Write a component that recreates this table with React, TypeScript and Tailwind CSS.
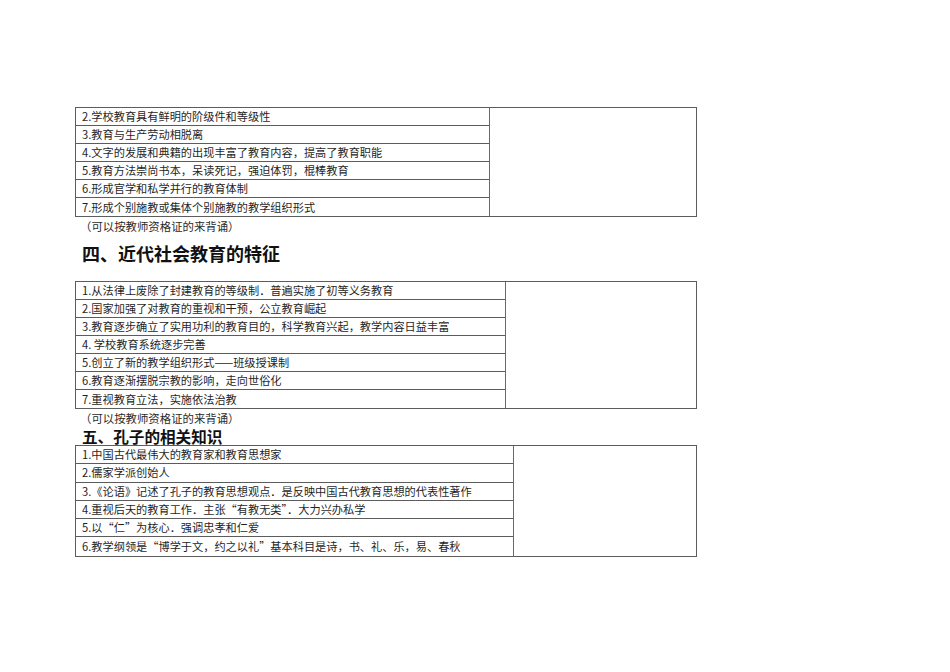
import React from "react";

const t1 = [
  "2.学校教育具有鲜明的阶级件和等级性",
  "3.教育与生产劳动相脱离",
  "4.文字的发展和典籍的出现丰富了教育内容，提高了教育职能",
  "5.教育方法崇尚书本，呆读死记，强迫体罚，棍棒教育",
  "6.形成官学和私学并行的教育体制",
  "7.形成个别施教或集体个别施教的教学组织形式",
];

const t2 = [
  "1.从法律上废除了封建教育的等级制．普遍实施了初等义务教育",
  "2.国家加强了对教育的重视和干预，公立教育崛起",
  "3.教育逐步确立了实用功利的教育目的，科学教育兴起，教学内容日益丰富",
  "4. 学校教育系统逐步完善",
  "5.创立了新的教学组织形式——班级授课制",
  "6.教育逐渐摆脱宗教的影响，走向世俗化",
  "7.重视教育立法，实施依法治教",
];

const t3 = [
  "1.中国古代最伟大的教育家和教育思想家",
  "2.儒家学派创始人",
  "3.《论语》记述了孔子的教育思想观点．是反映中国古代教育思想的代表性著作",
  "4.重视后天的教育工作．主张“有教无类”．大力兴办私学",
  "5.以“仁”为核心．强调忠孝和仁爱",
  "6.教学纲领是“博学于文，约之以礼”基本科目是诗，书、礼、乐，易、春秋",
];

function Table({ rows, leftW, tall }: { rows: string[]; leftW: string; tall?: boolean }) {
  return (
    <div className="flex w-[622px] border border-[#5c5c5c]">
      <div className={`${leftW} border-r border-[#6a6a6a]`}>
        {rows.map((r, i) => {
          const last = i === rows.length - 1;
          const h = tall ? "h-[18.3px]" : "h-[18px]";
          return (
            <div
              key={i}
              className={`${h} pl-[6px] flex items-center whitespace-nowrap text-[11.2px] leading-[17px] text-[#1f1f1f] ${
                last ? "" : "border-b border-[#5c5c5c]"
              }`}
            >
              {r}
            </div>
          );
        })}
      </div>
      <div className="flex-1" />
    </div>
  );
}

export default function App() {
  return (
    <div className="w-[950px] h-[672px] bg-white font-['Noto_Sans_CJK_SC',sans-serif] pt-[107px] pl-[75px]">
      <Table rows={t1} leftW="w-[414px]" />
      <div className="h-[18px] leading-[18px] pl-[5px] text-[11.4px] text-[#2a2a2a]">（可以按教师资格证的来背诵）</div>
      <div className="mt-[5px] h-[26px] leading-[26px] pl-[7px] text-[18px] font-bold text-[#111]">四、近代社会教育的特征</div>
      <div className="h-[15px]" />
      <Table rows={t2} leftW="w-[430px]" />
      <div className="h-[19px] leading-[19px] pl-[5px] text-[11.4px] text-[#2a2a2a]">（可以按教师资格证的来背诵）</div>
      <div className="h-[17px] leading-[16px] pl-[7px] text-[15.6px] font-bold text-[#111]">五、孔子的相关知识</div>
      <Table rows={t3} leftW="w-[438px]" tall />
    </div>
  );
}
